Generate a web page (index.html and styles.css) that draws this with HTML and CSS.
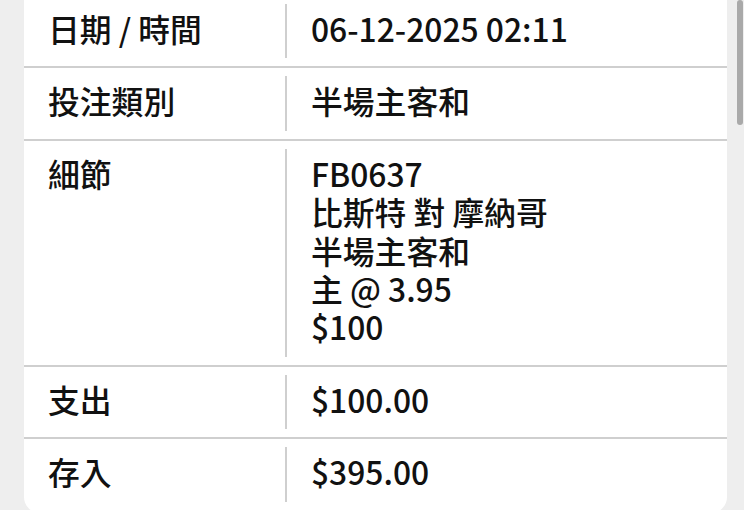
FILE: index.html
```html
<!DOCTYPE html>
<html lang="zh-Hant">
<head>
<meta charset="utf-8">
<link rel="stylesheet" href="styles.css">
</head>
<body>
<div class="card">
  <div class="row">
    <div class="label">日期 / 時間</div>
    <div class="value">06-12-2025 02:11</div>
  </div>
  <div class="row">
    <div class="label">投注類別</div>
    <div class="value">半場主客和</div>
  </div>
  <div class="row">
    <div class="label">細節</div>
    <div class="value">FB0637<br>比斯特 對 摩納哥<br>半場主客和<br>主 @ 3.95<br>$100</div>
  </div>
  <div class="row">
    <div class="label">支出</div>
    <div class="value">$100.00</div>
  </div>
  <div class="row">
    <div class="label">存入</div>
    <div class="value">$395.00</div>
  </div>
</div>
<div class="scrollbar"></div>
</body>
</html>
```

FILE: styles.css
```css
html, body {
  margin: 0;
  padding: 0;
  background: #eeeeee;
  overflow: hidden;
  height: 510px;
}
body {
  font-family: "Noto Sans CJK TC", "Noto Sans", sans-serif;
  font-size: 31.8px;
  font-weight: 500;
  color: #111;
  padding: 0 17px 0 24px;
}
.card {
  background: #fff;
  margin-top: -4px;
  border-radius: 0 0 16px 16px;
}
.row {
  display: flex;
  border-bottom: 2px solid #cfcfcf;
}
.row:last-child {
  border-bottom: none;
  padding-bottom: 3px;
}
.label {
  width: 237px;
  padding: 13px 0 19px 24px;
  line-height: 38.4px;
}
.value {
  flex: 1;
  margin: 8px 0;
  padding: 5px 0 11px 24px;
  border-left: 2px solid #cfcfcf;
  line-height: 38.4px;
}
.scrollbar {
  position: absolute;
  top: 0;
  right: 1px;
  width: 6px;
  height: 125px;
  border-radius: 3px;
  background: #a9a9a9;
}
```
